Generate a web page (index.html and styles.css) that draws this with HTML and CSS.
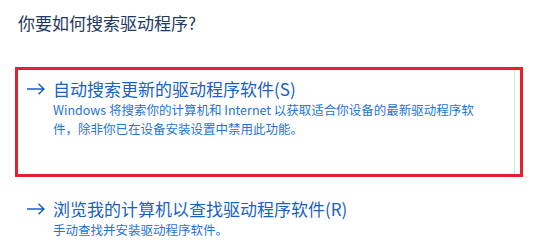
FILE: index.html
```html
<!DOCTYPE html>
<html lang="zh-CN">
<head>
<meta charset="utf-8">
<title>更新驱动程序</title>
<link rel="stylesheet" href="styles.css">
</head>
<body>
<div class="page">
  <h1 class="title">你要如何搜索驱动程序?</h1>

  <div class="highlight">
    <div class="option option--hover">
      <svg class="arrow" width="18" height="12" viewBox="0 0 18 12" aria-hidden="true">
        <path d="M0 6H17M11.5 0.7L17 6L11.5 11.3" fill="none" stroke="currentColor" stroke-width="1.5"/>
      </svg>
      <div class="text">
        <div class="heading">自动搜索更新的驱动程序软件(S)</div>
        <div class="desc">Windows 将搜索你的计算机和 Internet 以获取适合你设备的最新驱动程序软<br>件，除非你已在设备安装设置中禁用此功能。</div>
      </div>
    </div>
  </div>

  <div class="option option--plain">
    <svg class="arrow" width="18" height="12" viewBox="0 0 18 12" aria-hidden="true">
      <path d="M0 6H17M11.5 0.7L17 6L11.5 11.3" fill="none" stroke="currentColor" stroke-width="1.5"/>
    </svg>
    <div class="text">
      <div class="heading">浏览我的计算机以查找驱动程序软件(R)</div>
      <div class="desc">手动查找并安装驱动程序软件。</div>
    </div>
  </div>
</div>
</body>
</html>
```

FILE: styles.css
```css
html, body {
  margin: 0;
  padding: 0;
  background: #ffffff;
}

body {
  font-family: "Noto Sans CJK SC", "Noto Sans", sans-serif;
  width: 543px;
  height: 247px;
  overflow: hidden;
}

.page {
  padding: 11px 0 0 18px;
}

.title {
  margin: 0;
  font-size: 17px;
  font-weight: normal;
  line-height: 24px;
  color: #1e3a62;
}

.highlight {
  margin: 32px 0 0 -3px;
  width: 508px;
  height: 110px;
  box-sizing: border-box;
  border: 3px solid #e2212b;
}

.option {
  display: flex;
  align-items: flex-start;
  color: #1a5fc4;
}

.option--hover {
  height: 100%;
  box-sizing: border-box;
  margin-right: 5px;
  padding: 9px 0 0 9px;
  border-right: 1px solid #d3dfeb;
}

.option--plain {
  margin-top: 22px;
  padding-left: 9px;
}

.arrow {
  flex: none;
  margin: 4px 8px 0 0;
  color: #1a5fc4;
}

.text {
  display: flex;
  flex-direction: column;
  gap: 1px;
}

.heading {
  font-size: 17px;
  line-height: 20px;
  color: #1a5fc4;
  white-space: nowrap;
}

.desc {
  font-size: 12.5px;
  line-height: 19px;
  color: #2673d6;
  white-space: nowrap;
}
```
